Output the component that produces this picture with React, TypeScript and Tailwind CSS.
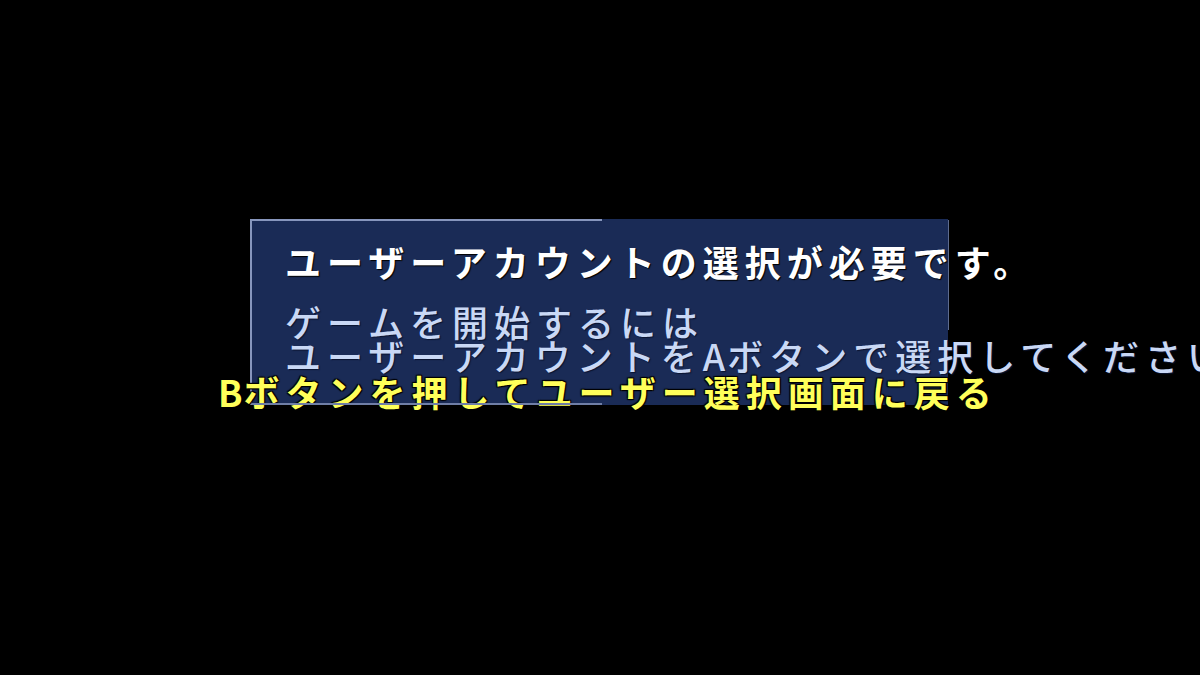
const jp = "font-['Noto_Sans_CJK_JP','Noto_Sans',sans-serif]";

export default function App() {
  return (
    <div className={`h-[675px] w-[1200px] overflow-hidden bg-black ${jp}`}>
      <div className="pl-[250px] pt-[219px]">
        {/* ── Dialog panel ── */}
        <div className="relative h-[186px] w-[698px] border-l-2 border-[#8796bd] bg-[#1a2b56]">
          {/* partial frame lines */}
          <div className="absolute left-0 top-0 h-[2px] w-[350px] bg-[#8796bd]" />
          <div className="absolute bottom-0 left-0 h-[2px] w-[350px] bg-[#6f7ea6]" />
          <div className="absolute right-[-1px] top-[1px] h-[110px] w-px bg-[#5d6b8e]" />

          <div className="whitespace-nowrap pl-[33px] pt-[24px] text-[36px] leading-[36px] tracking-[6px]">
            <p className="h-[36px] font-bold text-white [text-shadow:1px_1px_1px_#000]">
              ユーザーアカウントの選択が必要です。
            </p>
            <p className="mt-[24px] h-[34px] font-medium text-[#c9d8f5] [text-shadow:1px_1px_1px_#0a1430]">
              ゲームを開始するには
            </p>
            <p className="h-[36px] font-medium text-[#c9d8f5] [text-shadow:1px_1px_1px_#0a1430]">
              ユーザーアカウントを<span className="tracking-[2px]">A</span>ボタンで選択してください
            </p>
            <p className="-ml-[67px] h-[36px] font-bold text-[#ffff5a] [text-shadow:1px_1px_1px_#000,-1px_-1px_1px_#000,1px_-1px_1px_#000,-1px_1px_1px_#000]">
              <span className="tracking-[1px]">B</span>ボタンを押してユーザー選択画面に戻る
            </p>
          </div>
        </div>
      </div>
    </div>
  );
}
